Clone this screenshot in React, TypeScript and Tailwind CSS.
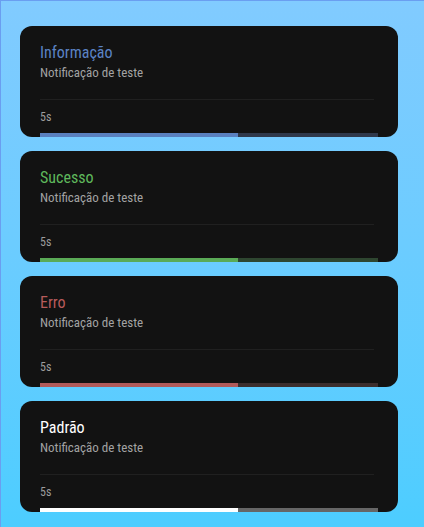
import React from 'react';

type Toast = {
  title: string;
  titleClass: string;
  fillClass: string;
  trackClass: string;
};

const toasts: Toast[] = [
  {
    title: 'Informação',
    titleClass: 'text-[#5b83c4]',
    fillClass: 'bg-[#5a80bf]',
    trackClass: 'bg-[#2f384b]',
  },
  {
    title: 'Sucesso',
    titleClass: 'text-[#5fb85c]',
    fillClass: 'bg-[#5aaa56]',
    trackClass: 'bg-[#2e4630]',
  },
  {
    title: 'Erro',
    titleClass: 'text-[#b85b5b]',
    fillClass: 'bg-[#b05a5a]',
    trackClass: 'bg-[#3c2e2e]',
  },
  {
    title: 'Padrão',
    titleClass: 'text-white',
    fillClass: 'bg-white',
    trackClass: 'bg-[#666666]',
  },
];

const ToastCard = ({ toast }: { toast: Toast }) => (
  <div className="flex flex-col rounded-xl bg-[#121212] px-5 pt-[15px]">
    <h2 className={`text-base leading-6 font-normal ${toast.titleClass}`}>
      {toast.title}
    </h2>
    <p className="text-[13px] leading-4 text-[#a3a3a3]">Notificação de teste</p>
    <div className="mt-[18px] mr-1 h-px bg-[#202020]" />
    <span className="pt-[9px] text-xs leading-4 text-[#9c9c9c]">5s</span>
    <div className={`mt-2 flex h-1 w-full ${toast.trackClass}`}>
      <div className={`h-full w-[198px] ${toast.fillClass}`} />
    </div>
  </div>
);

export default function App() {
  return (
    <div
      className="min-h-[527px] border-t border-l border-[#6a9ef0] bg-gradient-to-b from-[#81cbff] to-[#4ccdff] pt-[25px] pl-[19px] font-stretch-[85%]"
      style={{ fontFamily: 'Roboto, "Liberation Sans", sans-serif' }}
    >
      <div className="flex w-[378px] flex-col gap-[14px]">
        {toasts.map((toast) => (
          <ToastCard key={toast.title} toast={toast} />
        ))}
      </div>
    </div>
  );
}
